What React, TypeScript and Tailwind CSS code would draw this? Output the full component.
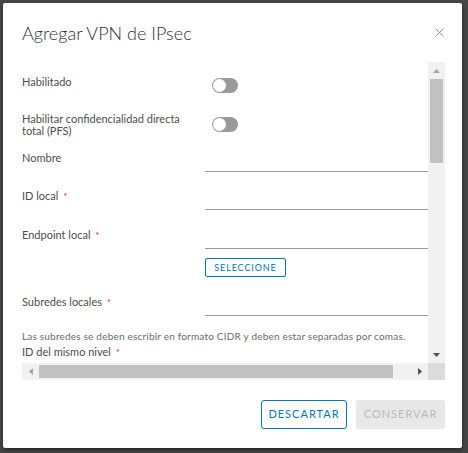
import React from "react";

const FONT = { fontFamily: "Lato, 'Open Sans', sans-serif" };

function Toggle() {
  return (
    <div className="relative mt-[4px] h-[15px] w-[26px] rounded-full bg-[#9a9a9a]">
      <div className="absolute left-[1px] top-[1px] h-[13px] w-[13px] rounded-full bg-white" />
    </div>
  );
}

function Req() {
  return <span className="ml-[5px] text-[9px] text-[#e12200]">*</span>;
}

function InputRow({ label, required, mt }: { label: string; required?: boolean; mt: string }) {
  return (
    <div className={`flex ${mt}`}>
      <div className="w-[183px] shrink-0 pt-[5px] text-[11px] leading-[12px] text-[#4d4d4d]">
        {label}
        {required && <Req />}
      </div>
      <div className="h-[25px] w-[243px] border-b border-[#9a9a9a]" />
    </div>
  );
}

function Arrow({ dir, color }: { dir: "up" | "down" | "left" | "right"; color: string }) {
  const pts = {
    up: "0,4 7,4 3.5,0",
    down: "0,0 7,0 3.5,4",
    left: "4,0 4,7 0,3.5",
    right: "0,0 0,7 4,3.5",
  }[dir];
  const vertical = dir === "up" || dir === "down";
  return (
    <svg width={vertical ? 7 : 4} height={vertical ? 4 : 7} viewBox={vertical ? "0 0 7 4" : "0 0 4 7"}>
      <polygon points={pts} fill={color} />
    </svg>
  );
}

export default function App() {
  return (
    <div className="h-[453px] w-[468px] bg-[#474747] pl-[3px] pt-[3px]" style={FONT}>
      <div className="flex h-[445px] w-[459px] flex-col rounded-[2px] bg-white shadow-[0_2px_4px_rgba(0,0,0,0.5)]">
        <div className="flex h-[59px] items-start justify-between pl-[19px] pr-[18px] pt-[19px]">
          <h1 className="text-[18px] font-light leading-[22px] text-[#313131]">Agregar VPN de IPsec</h1>
          <svg width="9" height="9" viewBox="0 0 9 9" className="mt-[6px]">
            <path d="M0.5 0.5 L8.5 8.5 M8.5 0.5 L0.5 8.5" stroke="#9a9a9a" strokeWidth="1" />
          </svg>
        </div>

        <div className="ml-[19px] flex h-[318px] w-[423px] flex-col">
          <div className="flex h-[301px]">
            <div className="w-[406px] overflow-hidden">
              <div className="w-[432px] pt-[12px]">
                <div className="flex h-[39px]">
                  <div className="w-[190px] shrink-0 pt-[2px] text-[11px] leading-[12px] text-[#4d4d4d]">Habilitado</div>
                  <Toggle />
                </div>
                <div className="flex h-[34px]">
                  <div className="w-[190px] shrink-0 pr-[20px] text-[11px] leading-[12px] text-[#4d4d4d]">
                    Habilitar confidencialidad directa total (PFS)
                  </div>
                  <Toggle />
                </div>
                <InputRow label="Nombre" mt="mt-0" />
                <InputRow label="ID local" required mt="mt-[13px]" />
                <InputRow label="Endpoint local" required mt="mt-[14px]" />
                <div className="ml-[183px] mt-[9px] flex">
                  <button className="h-[19px] w-[81px] rounded-[2px] border border-[#0079b8] text-[9px] leading-none tracking-[0.9px] text-[#0079b8]">
                    SELECCIONE
                  </button>
                </div>
                <InputRow label="Subredes locales" required mt="mt-[14px]" />
                <p className="mt-[13px] text-[10px] leading-[14px] tracking-[0.2px] text-[#6a6a6a]">
                  Las subredes se deben escribir en formato CIDR y deben estar separadas por comas.
                </p>
                <div className="mt-[3px] flex">
                  <div className="w-[183px] shrink-0 text-[11px] leading-[12px] text-[#4d4d4d]">
                    ID del mismo nivel
                    <Req />
                  </div>
                  <div className="h-[20px] w-[243px] border-b border-[#9a9a9a]" />
                </div>
              </div>
            </div>
            {/* vertical scrollbar */}
            <div className="flex w-[17px] flex-col items-center bg-[#f1f1f1]">
              <div className="flex h-[17px] items-center justify-center">
                <Arrow dir="up" color="#a3a3a3" />
              </div>
              <div className="h-[84px] w-[13px] bg-[#c1c1c1]" />
              <div className="flex-1" />
              <div className="flex h-[17px] items-center justify-center">
                <Arrow dir="down" color="#505050" />
              </div>
            </div>
          </div>
          {/* horizontal scrollbar */}
          <div className="flex h-[17px]">
            <div className="flex w-[406px] items-center bg-[#f1f1f1]">
              <div className="flex w-[17px] justify-center">
                <Arrow dir="left" color="#a3a3a3" />
              </div>
              <div className="h-[13px] w-[354px] bg-[#c1c1c1]" />
              <div className="flex-1" />
              <div className="flex w-[17px] justify-center">
                <Arrow dir="right" color="#505050" />
              </div>
            </div>
            <div className="w-[17px] bg-[#dcdcdc]" />
          </div>
        </div>

        <div className="flex flex-1 items-start justify-end gap-[9px] pr-[17px] pt-[20px]">
          <button className="h-[29px] w-[86px] rounded-[3px] border border-[#0079b8] text-[11px] tracking-[1px] text-[#0079b8]">
            DESCARTAR
          </button>
          <button className="h-[29px] w-[89px] rounded-[3px] bg-[#e8e8e8] text-[11px] tracking-[1px] text-[#b9b9b9]">
            CONSERVAR
          </button>
        </div>
      </div>
    </div>
  );
}
